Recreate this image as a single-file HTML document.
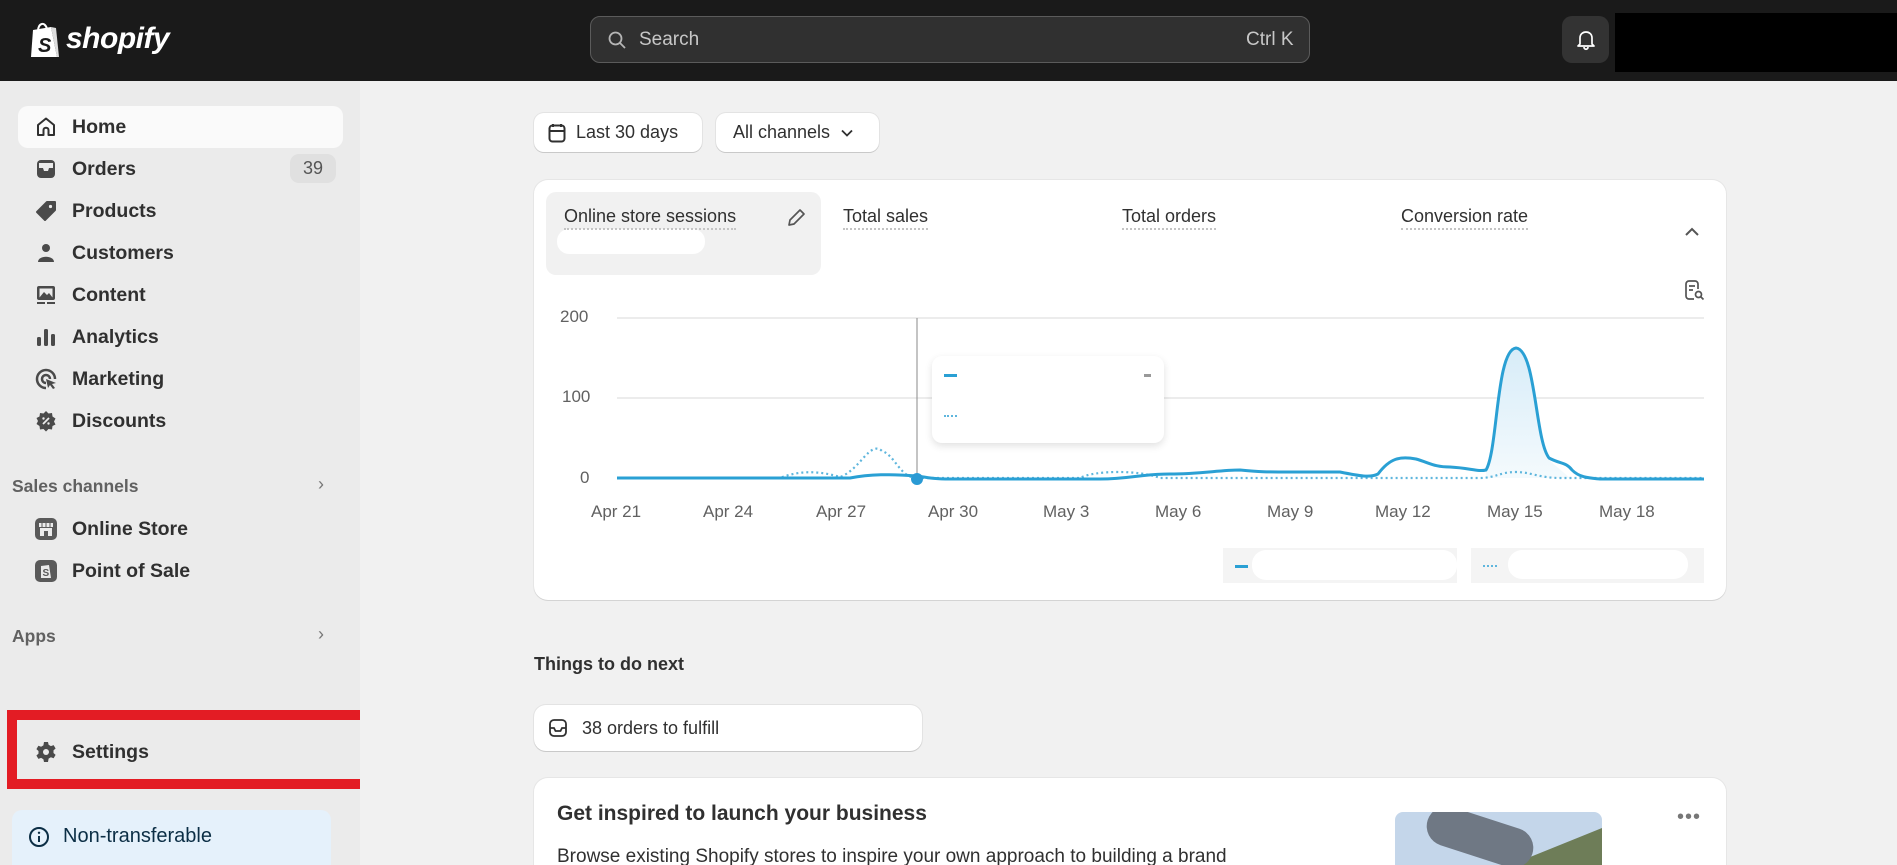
<!DOCTYPE html>
<html style="overflow:hidden;width:1897px;height:865px"><head><meta charset="utf-8"><style>
*{box-sizing:border-box;margin:0;padding:0}
body{width:1897px;height:865px;overflow:hidden;background:#f1f1f1;font-family:"Liberation Sans",sans-serif;color:#303030;position:relative}
.abs{position:absolute}
.top{left:0;top:0;width:1897px;height:81px;background:#1a1a1a}
.side{left:0;top:81px;width:360px;height:784px;background:#ebebeb}
.nav{position:absolute;left:18px;width:325px;height:40px;display:flex;align-items:center;font-size:19.5px;font-weight:600;color:#303030}
.nav svg{position:absolute;left:16px;width:24px;height:24px}
.nav span{position:absolute;left:54px}
.sec{position:absolute;left:12px;font-size:17.5px;font-weight:700;color:#616161}
.chev{position:absolute;left:318px;color:#777;font-size:18px}
.btn{background:#fff;border-radius:10px;box-shadow:0 1px 0 #c9c9c9,0 0 0 1px #e3e3e3;display:flex;align-items:center;font-size:18px;color:#303030}
.card{background:#fff;border-radius:14px;box-shadow:0 1px 0 #d4d4d4,0 0 0 1px #e6e6e6}
.ml{font-size:18px;color:#303030;border-bottom:2px dotted #c4c4c4;padding-bottom:1px}
.ax{font-size:17px;color:#616161}
</style></head><body>
<div class="abs top"></div>
<svg class="abs" style="left:29px;top:21px" width="32" height="38" viewBox="0 0 32 38"><path d="M4 9 L22 6 L28 36 L2 36 Z" fill="#fff"/><path d="M9 10 C9 2 16 0 18 8" stroke="#fff" stroke-width="2" fill="none"/><path d="M22 6 L27 7 L30 36 L28 36Z" fill="#ddd"/><text x="9" y="31" font-family="Liberation Sans" font-weight="700" font-size="20" font-style="italic" fill="#1a1a1a">S</text></svg>
<div class="abs" style="left:66px;top:22px;color:#fff;font-size:30px;font-weight:700;font-style:italic;letter-spacing:-0.5px">shopify</div>
<div class="abs" style="left:590px;top:16px;width:720px;height:47px;background:#303030;border:1px solid #5b5b5b;border-radius:10px"></div>
<svg class="abs" style="left:607px;top:30px" width="20" height="20" viewBox="0 0 20 20"><circle cx="8.5" cy="8.5" r="6" stroke="#b5b5b5" stroke-width="1.8" fill="none"/><path d="M13 13l5 5" stroke="#b5b5b5" stroke-width="1.8"/></svg>
<div class="abs" style="left:639px;top:29px;color:#c7c7c7;font-size:19px">Search</div>
<div class="abs" style="left:1246px;top:29px;color:#c7c7c7;font-size:19px">Ctrl K</div>
<div class="abs" style="left:1562px;top:16px;width:47px;height:47px;background:#333;border-radius:10px"></div>
<svg class="abs" style="left:1574px;top:28px" width="24" height="24" viewBox="0 0 24 24"><path d="M6 16 L6 10 C6 6 9 4 12 4 C15 4 18 6 18 10 L18 16 L20 18 L4 18 Z" stroke="#fff" stroke-width="1.7" fill="none" stroke-linejoin="round"/><path d="M10 19 C10 22 14 22 14 19" stroke="#fff" stroke-width="1.7" fill="none"/></svg>
<div class="abs" style="left:1615px;top:13px;width:282px;height:59px;background:#000"></div>

<div class="abs side"></div>
<div class="abs" style="left:18px;top:106px;width:325px;height:42px;background:#fafafa;border-radius:10px"></div>
<div class="nav" style="top:107px"><svg viewBox="0 0 24 24"><path d="M4 20 L4 10 L12 3.5 L20 10 L20 20 L14.5 20 L14.5 15 C14.5 12 9.5 12 9.5 15 L9.5 20 Z" stroke="#303030" stroke-width="2" fill="none" stroke-linejoin="round"/></svg><span>Home</span></div>
<div class="nav" style="top:149px"><svg viewBox="0 0 24 24"><rect x="3" y="3" width="18" height="18" rx="4" fill="#4a4a4a"/><path d="M5 11 L9 11 L10 14 L14 14 L15 11 L19 11 L19 6 L5 6Z" fill="#ebebeb"/></svg><span>Orders</span><div style="position:absolute;left:272px;top:5px;width:46px;height:29px;border-radius:9px;background:#e0e0e0;font-size:18px;font-weight:500;color:#555;display:flex;align-items:center;justify-content:center">39</div></div>
<div class="nav" style="top:191px"><svg viewBox="0 0 24 24"><path d="M13 3 L21 3 L21 11 L11 21 L3 13 Z" fill="#4a4a4a" stroke="#4a4a4a" stroke-width="2" stroke-linejoin="round"/><circle cx="16.5" cy="7.5" r="1.6" fill="#ebebeb"/></svg><span>Products</span></div>
<div class="nav" style="top:233px"><svg viewBox="0 0 24 24"><circle cx="12" cy="7" r="4" fill="#4a4a4a"/><path d="M4 21 C4 14 20 14 20 21Z" fill="#4a4a4a"/></svg><span>Customers</span></div>
<div class="nav" style="top:275px"><svg viewBox="0 0 24 24"><rect x="3" y="3" width="18" height="14" rx="2" fill="#4a4a4a"/><rect x="5.5" y="5.5" width="13" height="9" fill="#ebebeb"/><path d="M5.5 14.5 L10 9 L13 12 L15 10 L18.5 14.5Z" fill="#4a4a4a"/><path d="M3 20h8M13 20h8" stroke="#4a4a4a" stroke-width="2"/></svg><span>Content</span></div>
<div class="nav" style="top:317px"><svg viewBox="0 0 24 24"><rect x="3" y="12" width="4" height="9" rx="1.5" fill="#4a4a4a"/><rect x="10" y="4" width="4" height="17" rx="1.5" fill="#4a4a4a"/><rect x="17" y="9" width="4" height="12" rx="1.5" fill="#4a4a4a"/></svg><span>Analytics</span></div>
<div class="nav" style="top:359px"><svg viewBox="0 0 24 24"><path d="M12 21 A9 9 0 1 1 21 12" stroke="#4a4a4a" stroke-width="2.5" fill="none"/><path d="M12 16 A4 4 0 1 1 16 12" stroke="#4a4a4a" stroke-width="2.5" fill="none"/><path d="M12 12 L22 16 L18 17 L21 21 L19 22 L16 18 L14 21Z" fill="#4a4a4a"/></svg><span>Marketing</span></div>
<div class="nav" style="top:401px"><svg viewBox="0 0 24 24"><path d="M12 2 L14.5 4.5 L18 4 L18.5 7.5 L21.5 9.5 L20 12.5 L21.5 15.5 L18.5 17 L18 20.5 L14.5 20 L12 22.5 L9.5 20 L6 20.5 L5.5 17 L2.5 15 L4 12 L2.5 9 L5.5 7.5 L6 4 L9.5 4.5Z" fill="#4a4a4a"/><path d="M9 15 L15 9" stroke="#ebebeb" stroke-width="1.8"/><circle cx="9.5" cy="9.5" r="1.2" fill="#ebebeb"/><circle cx="14.5" cy="14.5" r="1.2" fill="#ebebeb"/></svg><span>Discounts</span></div>

<div class="sec" style="top:476px">Sales channels</div><div class="chev" style="top:474px">›</div>
<div class="nav" style="top:509px"><svg viewBox="0 0 24 24"><rect x="1" y="1" width="22" height="22" rx="5" fill="#5a5a5a"/><path d="M5 6h14v4H5z M6 11h12v8H6z" fill="#ebebeb"/><rect x="10" y="14" width="4" height="5" fill="#5a5a5a"/><path d="M8 6v4M12 6v4M16 6v4" stroke="#5a5a5a" stroke-width="1"/></svg><span>Online Store</span></div>
<div class="nav" style="top:551px"><svg viewBox="0 0 24 24"><rect x="1" y="1" width="22" height="22" rx="5" fill="#5a5a5a"/><path d="M7 7 L15 6 L17 19 L7 19Z" fill="#ebebeb"/><text x="8.5" y="17" font-size="10" font-weight="700" font-family="Liberation Sans" fill="#5a5a5a">S</text></svg><span>Point of Sale</span></div>
<div class="sec" style="top:626px">Apps</div><div class="chev" style="top:624px">›</div>

<div class="abs" style="left:7px;top:710px;width:353px;height:79px;border:10px solid #e31c24;border-right:none"></div>
<div class="nav" style="top:732px"><svg viewBox="0 0 24 24"><path d="M10 2h4l.6 2.8 2.3 1.3 2.7-1 2 3.4-2.1 1.9v2.6l2.1 1.9-2 3.4-2.7-1-2.3 1.3L14 22h-4l-.6-2.8-2.3-1.3-2.7 1-2-3.4 2.1-1.9v-2.6L2.4 9.1l2-3.4 2.7 1 2.3-1.3z" fill="#4a4a4a"/><circle cx="12" cy="12" r="3" fill="#ebebeb"/></svg><span>Settings</span></div>

<div class="abs" style="left:12px;top:810px;width:319px;height:55px;background:#e5f1fb;border-radius:10px 10px 0 0"></div>
<svg class="abs" style="left:28px;top:826px" width="22" height="22" viewBox="0 0 22 22"><circle cx="11" cy="11" r="9" stroke="#0b2e45" stroke-width="2" fill="none"/><path d="M11 10v6" stroke="#0b2e45" stroke-width="2"/><circle cx="11" cy="6.8" r="1.2" fill="#0b2e45"/></svg>
<div class="abs" style="left:63px;top:825px;font-size:20px;font-weight:500;color:#0b2e45">Non-transferable</div>

<div class="abs btn" style="left:534px;top:113px;width:168px;height:39px"><svg style="margin-left:14px;margin-right:10px" width="18" height="20" viewBox="0 0 18 20"><rect x="1.5" y="2.5" width="15" height="16" rx="3" stroke="#303030" stroke-width="2" fill="none"/><path d="M1.5 8h15M5 1v3M13 1v3" stroke="#303030" stroke-width="2"/></svg>Last 30 days</div>
<div class="abs btn" style="left:716px;top:113px;width:163px;height:39px;padding-left:17px">All channels<svg style="margin-left:10px" width="14" height="10" viewBox="0 0 14 10"><path d="M2 2.5l5 5 5-5" stroke="#303030" stroke-width="1.8" fill="none"/></svg></div>

<div class="abs card" style="left:534px;top:180px;width:1192px;height:420px"></div>
<div class="abs" style="left:546px;top:192px;width:275px;height:83px;background:#f1f1f1;border-radius:10px"></div>
<div class="abs" style="left:557px;top:229px;width:148px;height:25px;background:#fff;border-radius:12px"></div>
<div class="abs ml" style="left:564px;top:206px">Online store sessions</div>
<svg class="abs" style="left:785px;top:207px" width="22" height="22" viewBox="0 0 22 22"><path d="M4 18 L5 13 L15 3 L19 7 L9 17 Z" stroke="#555" stroke-width="1.7" fill="none" stroke-linejoin="round"/></svg>
<div class="abs ml" style="left:843px;top:206px">Total sales</div>
<div class="abs ml" style="left:1122px;top:206px">Total orders</div>
<div class="abs ml" style="left:1401px;top:206px">Conversion rate</div>
<svg class="abs" style="left:1683px;top:225px" width="18" height="14" viewBox="0 0 18 14"><path d="M3 10l6-6 6 6" stroke="#555" stroke-width="2" fill="none"/></svg>
<svg class="abs" style="left:1683px;top:279px" width="22" height="22" viewBox="0 0 22 22"><path d="M15 10V5a3 3 0 0 0-3-3H6a3 3 0 0 0-3 3v12a3 3 0 0 0 3 3h5" stroke="#555" stroke-width="1.7" fill="none"/><path d="M6 7h6M6 11h4" stroke="#555" stroke-width="1.7"/><circle cx="15.5" cy="15.5" r="3" stroke="#555" stroke-width="1.7" fill="none"/><path d="M18 18l2.5 2.5" stroke="#555" stroke-width="1.7"/></svg>

<div class="abs ax" style="left:560px;top:307px">200</div>
<div class="abs ax" style="left:562px;top:387px">100</div>
<div class="abs ax" style="left:580px;top:468px">0</div>
<svg class="abs" style="left:0;top:0" width="1897" height="865" viewBox="0 0 1897 865">
<defs><linearGradient id="g" x1="0" y1="0" x2="0" y2="1"><stop offset="0" stop-color="#d7ecf8"/><stop offset="1" stop-color="#f4fafd"/></linearGradient></defs>
<line x1="617" y1="318" x2="1704" y2="318" stroke="#e6e6e6" stroke-width="1.5"/>
<line x1="617" y1="398" x2="1704" y2="398" stroke="#e6e6e6" stroke-width="1.5"/>
<line x1="917" y1="318" x2="917" y2="479" stroke="#8a8a8a" stroke-width="1"/>
<path d="M1486 468 C1494 468 1496 350 1516 348 C1536 350 1538 460 1549 460 L1570 478 L1486 478Z" fill="url(#g)"/>
<path d="M617 478 L780 478 C800 470 820 471 840 477 C860 470 870 440 882 451 C895 455 900 478 917 478" stroke="#5fb6dd" stroke-width="2.2" stroke-dasharray="2 3" fill="none"/>
<path d="M917 478 L1080 478 C1095 470 1140 470 1160 478 L1480 478 C1495 478 1500 472 1516 472 C1530 472 1540 478 1560 478 L1704 478" stroke="#5fb6dd" stroke-width="2.2" stroke-dasharray="2 3" fill="none"/>
<path d="M617 478 L850 478 C870 474 890 474 917 476 C930 478 935 479 950 479 L1100 479 C1130 479 1140 474 1170 474 C1200 474 1220 470 1240 470 C1260 472 1265 472 1290 472 L1340 472 C1360 476 1370 478 1378 474 C1390 458 1400 456 1416 459 C1430 463 1434 467 1450 467 C1470 468 1478 472 1486 470 C1498 450 1496 350 1516 348 C1536 350 1535 440 1549 458 C1560 464 1566 462 1572 470 C1580 478 1590 478 1600 479 L1704 479" stroke="#2aa0d4" stroke-width="3" fill="none"/>
<circle cx="917" cy="479" r="6" fill="#2a9ad4"/>
</svg>
<div class="abs" style="left:932px;top:356px;width:232px;height:87px;background:#fff;border-radius:10px;box-shadow:0 3px 8px rgba(0,0,0,.12)"></div>
<div class="abs" style="left:944px;top:374px;width:13px;height:3px;background:#2aa0d4"></div>
<div class="abs" style="left:1144px;top:374px;width:7px;height:3px;background:#999"></div>
<div class="abs" style="left:944px;top:415px;width:13px;height:2px;border-top:2px dotted #5fb6dd"></div>

<div class="abs ax" style="left:591px;top:502px">Apr 21</div>
<div class="abs ax" style="left:703px;top:502px">Apr 24</div>
<div class="abs ax" style="left:816px;top:502px">Apr 27</div>
<div class="abs ax" style="left:928px;top:502px">Apr 30</div>
<div class="abs ax" style="left:1043px;top:502px">May 3</div>
<div class="abs ax" style="left:1155px;top:502px">May 6</div>
<div class="abs ax" style="left:1267px;top:502px">May 9</div>
<div class="abs ax" style="left:1375px;top:502px">May 12</div>
<div class="abs ax" style="left:1487px;top:502px">May 15</div>
<div class="abs ax" style="left:1599px;top:502px">May 18</div>

<div class="abs" style="left:1223px;top:548px;width:234px;height:35px;background:#f4f4f4"></div>
<div class="abs" style="left:1252px;top:550px;width:205px;height:30px;background:#fff;border-radius:14px"></div>
<div class="abs" style="left:1235px;top:565px;width:13px;height:3px;background:#2aa0d4"></div>
<div class="abs" style="left:1471px;top:548px;width:233px;height:35px;background:#f4f4f4"></div>
<div class="abs" style="left:1508px;top:550px;width:180px;height:29px;background:#fff;border-radius:14px"></div>
<div class="abs" style="left:1483px;top:565px;width:14px;height:2px;border-top:2px dotted #5fb6dd"></div>

<div class="abs" style="left:534px;top:654px;font-size:18px;font-weight:600;color:#303030">Things to do next</div>
<div class="abs btn" style="left:534px;top:705px;width:388px;height:46px;border-radius:12px"><svg style="margin-left:14px;margin-right:14px" width="20" height="20" viewBox="0 0 20 20"><rect x="2" y="2" width="16" height="16" rx="4" stroke="#303030" stroke-width="1.8" fill="none"/><path d="M2 10h4l1.5 3h5L14 10h4" stroke="#303030" stroke-width="1.8" fill="none"/></svg>38 orders to fulfill</div>

<div class="abs" style="left:534px;top:778px;width:1192px;height:87px;background:#fff;border-radius:14px 14px 0 0;box-shadow:0 0 0 1px #e6e6e6"></div>
<div class="abs" style="left:557px;top:802px;font-size:21px;font-weight:600;color:#303030">Get inspired to launch your business</div>
<div class="abs" style="left:557px;top:846px;font-size:19px;color:#303030;white-space:nowrap">Browse existing Shopify stores to inspire your own approach to building a brand</div>
<div class="abs" style="left:1395px;top:812px;width:207px;height:53px;background:#c4d6ea;border-radius:8px 8px 0 0;overflow:hidden">
<div style="position:absolute;left:80px;top:30px;width:200px;height:80px;background:#6e7d58;transform:rotate(-22deg)"></div>
<div style="position:absolute;left:30px;top:5px;width:110px;height:40px;background:#6f7884;border-radius:20px;transform:rotate(18deg)"></div>
</div>
<div class="abs" style="left:1677px;top:806px;font-size:20px;color:#777;letter-spacing:1px">•••</div>
</body></html>
